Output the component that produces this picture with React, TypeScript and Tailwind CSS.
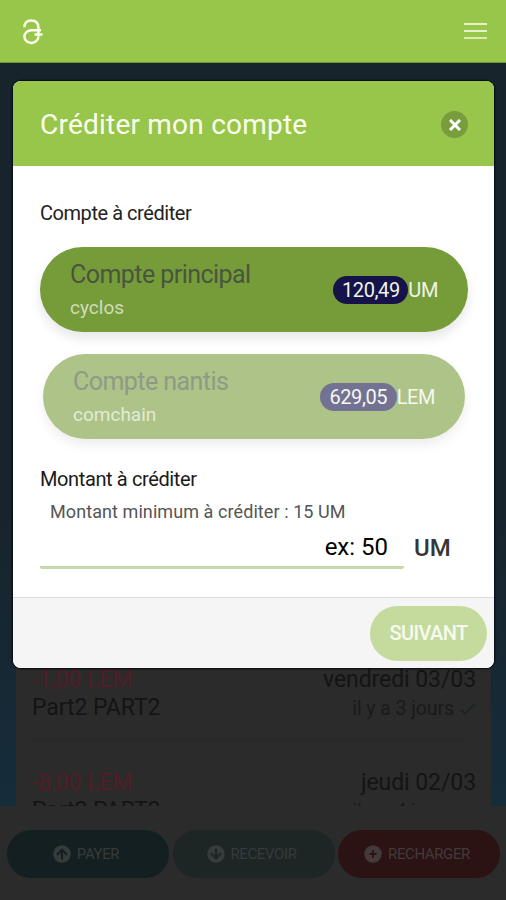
import { FaArrowCircleDown, FaArrowCircleUp } from 'react-icons/fa';

const transactions = [
  { id: 1, amount: '-1,00 LEM', name: 'Part2 PART2', date: 'vendredi 03/03', ago: 'il y a 3 jours' },
  { id: 2, amount: '-8,00 LEM', name: 'Part2 PART2', date: 'jeudi 02/03', ago: 'il y a 4 jours' },
];

function Logo() {
  return (
    <svg width="22" height="28" viewBox="0 0 22 28" fill="none" stroke="#fdffee" strokeWidth="2.5">
      <path d="M3.400 10.200C3.400 5.600 6.200 3.400 10 3.400c4.600 0 7.400 2.600 7.400 7v8.400" />
      <path d="M17.400 19.400A7 6.300 0 1 1 10.400 13.300H20" />
      <path d="M13.500 17.500H21.500" />
    </svg>
  );
}

function Check() {
  return (
    <svg width="16" height="12" viewBox="0 0 16 12" fill="none" stroke="#17231b" strokeWidth="1.6">
      <path d="M1 6.500L5 10.500L15 1" />
    </svg>
  );
}

function PlusCircle() {
  return (
    <svg width="18" height="18" viewBox="0 0 18 18">
      <circle cx="9" cy="9" r="8.700" fill="#443a3a" />
      <path d="M9 5V13M5.500 9H12.500" stroke="#2b1213" strokeWidth="1.800" />
    </svg>
  );
}

export default function App() {
  return (
    <div className="relative flex h-[900px] w-[506px] flex-col overflow-hidden bg-[#18242c] font-[Roboto,sans-serif]">
      <header className="flex h-[63px] shrink-0 items-center justify-between border-b border-[#6f9433] bg-[#97c64b] pl-[21px] pr-[19px]">
        <Logo />
        <button className="flex w-[23px] flex-col gap-[5px]" aria-label="Menu">
          <span className="h-[2px] bg-[#e6f3c9]" />
          <span className="h-[2px] bg-[#e6f3c9]" />
          <span className="h-[2px] bg-[#d9ecb4]" />
        </button>
      </header>

      <main className="flex min-h-0 flex-1 flex-col justify-end bg-linear-to-b from-[#18242c] from-60% to-[#152c3b] px-4">
        <div className="h-[146px] w-[475px] overflow-hidden bg-[#2b2b2b] pl-4 pr-[15px] pt-[6px]">
          {transactions.map((t) => (
            <div key={t.id} className="h-[103px]">
              <div className="flex h-7 items-center justify-between text-[23px] tracking-[-0.080px]">
                <span className="text-[#501d27]">{t.amount}</span>
                <span className="text-[#141414]">{t.date}</span>
              </div>
              <div className="flex h-[29px] items-center justify-between text-[23px] tracking-[-0.080px] text-[#141414]">
                <span>{t.name}</span>
                <span className="flex items-center gap-[6px] text-[19.500px] text-[#1a1a1a]">{t.ago} <Check /></span>
              </div>
              <div className="mr-[10px] mt-[16px] h-px bg-[#272727]" />
            </div>
          ))}
        </div>
      </main>

      <footer className="flex h-[94px] shrink-0 justify-between bg-[#2b2b2b] pl-[7px] pr-[6px] pt-6 text-[15px] tracking-[-0.400px] text-[#363b3b]">
        <button className="flex h-12 w-[162px] items-center justify-center gap-[6px] rounded-full bg-[#131f20] pr-1">
          <FaArrowCircleUp size={18} /> PAYER
        </button>
        <button className="flex h-12 w-[162px] items-center justify-center gap-[6px] rounded-full bg-[#1d2525] pr-1">
          <FaArrowCircleDown size={18} /> RECEVOIR
        </button>
        <button className="flex h-12 w-[162px] items-center justify-center gap-[6px] rounded-full bg-[#2b1213] pr-1 text-[#443a3a]">
          <PlusCircle /> RECHARGER
        </button>
      </footer>

      {/* Credit account modal */}
      <div className="absolute left-[13px] top-[81px] flex h-[587px] w-[481px] flex-col overflow-hidden rounded-lg bg-white shadow-[0_0_2px_1px_#020a10]">
        <div className="flex h-[85px] items-center justify-between bg-[#97c64b] pl-[27px] pr-[26px]">
          <h2 className="pt-[2px] text-[28px] tracking-[0.220px] text-[#fbffed]">Créditer mon compte</h2>
          <button className="mt-[2px] flex h-[27px] w-[27px] items-center justify-center rounded-full bg-[#789d3c]" aria-label="Fermer">
            <svg width="12" height="12" viewBox="0 0 12 12" stroke="#fff" strokeWidth="3">
              <path d="M1 1L11 11M11 1L1 11" />
            </svg>
          </button>
        </div>

        <div className="flex h-[431px] flex-col px-[27px] pt-[35px]">
          <p className="h-6 text-[20px] leading-[25px] tracking-[-0.450px] text-[#222]">Compte à créditer</p>

          <div className="mt-[22px] flex h-[85px] w-[428px] items-center justify-between rounded-full bg-[#769b39] pl-[30px] pr-[30px] shadow-[0_6px_12px_rgba(0,0,0,0.1)]">
            <div className="pt-[2px]">
              <p className="text-[25px] leading-[34px] tracking-[-0.550px] text-[#4a5540]">Compte principal</p>
              <p className="text-[19px] leading-[31px] text-[#d0dcbb]">cyclos</p>
            </div>
            <div className="flex items-center text-[20px] tracking-[-0.400px] text-[#f0f4e6]">
              <span className="flex h-7 w-[75px] items-center justify-center rounded-full bg-[#15134a]">120,49</span>UM
            </div>
          </div>

          <div className="mx-[3px] mt-[22px] flex h-[85px] w-[422px] items-center justify-between rounded-full bg-[#adc387] pl-[30px] pr-[30px] shadow-[0_6px_12px_rgba(0,0,0,0.07)]">
            <div className="pt-[2px]">
              <p className="text-[25px] leading-[34px] tracking-[-0.550px] text-[#8f9a86]">Compte nantis</p>
              <p className="text-[19px] leading-[31px] text-[#e3ead8]">comchain</p>
            </div>
            <div className="flex items-center text-[20px] tracking-[-0.450px] text-[#f6f8f0]">
              <span className="flex h-7 w-[77px] items-center justify-center rounded-full bg-[#737292]">629,05</span>LEM
            </div>
          </div>

          <p className="mt-[28px] h-6 text-[20px] leading-[25px] tracking-[-0.380px] text-[#1a1a1a]">Montant à créditer</p>
          <p className="mt-[8px] h-6 pl-[10px] text-[18px] leading-[25px] tracking-[0.080px] text-[#555]">Montant minimum à créditer : 15 UM</p>
          <div className="mt-[4px] flex items-start">
            <input
              className="h-[42px] w-[364px] rounded-[2px] border-b-[3px] border-[#c4d9a5] pr-4 text-right text-[24px] text-black outline-none placeholder:text-black"
              placeholder="ex: 50"
            />
            <span className="ml-[10px] text-[24px] font-medium leading-[42px] text-[#363636]">UM</span>
          </div>
        </div>

        <div className="flex flex-1 items-center justify-end border-t border-[#dbdbdb] bg-[#f5f5f5] pr-[7px]">
          <button className="h-[55px] w-[117px] rounded-full bg-[#c5db9d] text-[20px] font-medium tracking-[-0.600px] text-[#f7faef]">SUIVANT</button>
        </div>
      </div>
    </div>
  );
}
